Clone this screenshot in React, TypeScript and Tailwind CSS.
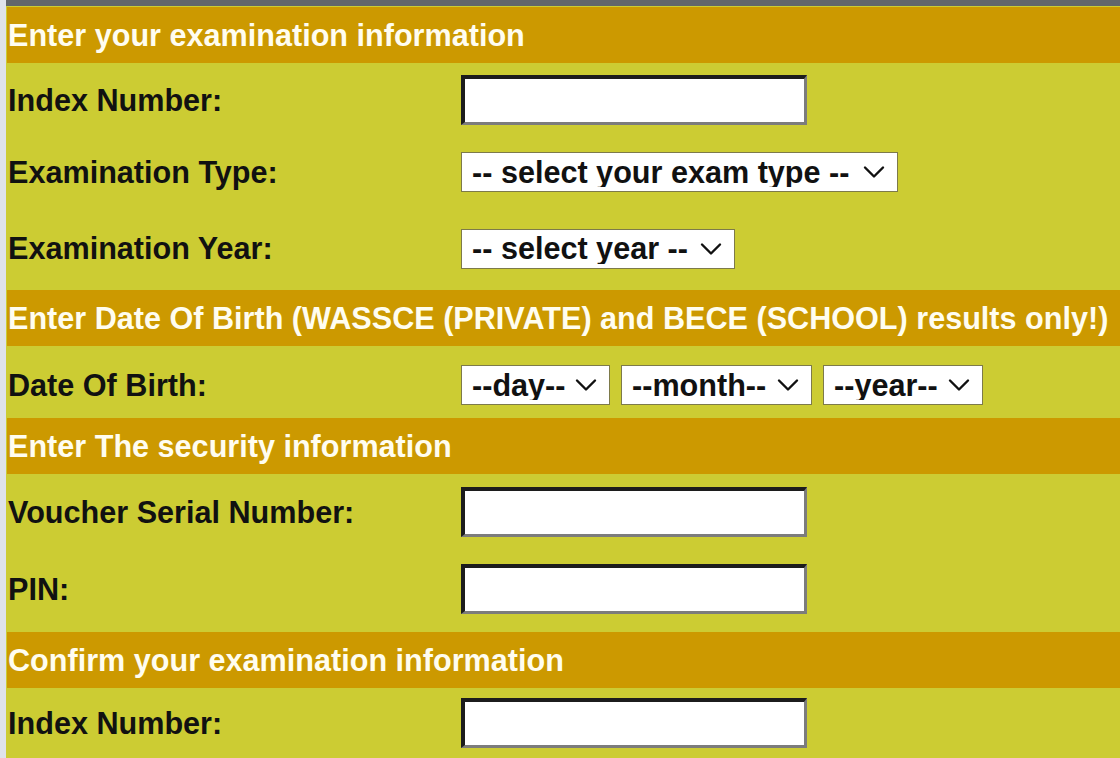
import React from "react";

const FONT = { fontFamily: '"Liberation Sans", Arial, sans-serif' };

function SectionHeader({ title, className = "" }: { title: string; className?: string }) {
  return (
    <div
      className={`ml-[1px] flex h-[56px] items-center whitespace-nowrap bg-[#cc9900] pl-[1px] text-[30.6px] font-bold leading-none text-[#fffdf0] ${className}`}
    >
      {title}
    </div>
  );
}

function TextBox() {
  return (
    <input
      type="text"
      className="h-[50px] w-[346px] border-[3px] border-t-[4px] border-l-[4px] border-t-[#1c1c1c] border-l-[#1c1c1c] border-b-[#7c7c7c] border-r-[#7c7c7c] bg-white px-2 text-[28px] outline-none"
    />
  );
}

function Dropdown({ label, width }: { label: string; width: string }) {
  return (
    <div className={`relative h-[40px] ${width}`}>
      <select
        defaultValue=""
        className="h-full w-full appearance-none border border-[#7d7a4a] bg-white pl-[10px] pr-[40px] text-[30.6px] font-bold leading-none text-[#111] outline-none"
        style={FONT}
      >
        <option value="">{label}</option>
      </select>
      <svg
        className="pointer-events-none absolute right-[13px] top-1/2 -translate-y-1/2"
        width="22"
        height="13"
        viewBox="0 0 22 13"
        fill="none"
      >
        <path d="M2 2 L11 11 L20 2" stroke="#111" strokeWidth="2.4" strokeLinecap="round" strokeLinejoin="round" />
      </svg>
    </div>
  );
}

function FormRow({
  label,
  children,
  className = "",
}: {
  label: string;
  children: React.ReactNode;
  className?: string;
}) {
  return (
    <div className={`flex items-center ${className}`}>
      <div className="w-[455px] pl-[2px] text-[30.6px] font-bold leading-none text-[#111]">{label}</div>
      <div className="flex gap-[11px]">{children}</div>
    </div>
  );
}

export default function App() {
  return (
    <div className="flex h-[758px] w-[1120px] overflow-hidden bg-[#cccc33]" style={FONT}>
      <div className="w-[6px] shrink-0 bg-[#dfe3ea]" />
      <div className="flex min-w-0 flex-1 flex-col">
        <div className="h-[6px] bg-[#62666a]" />
        <SectionHeader title="Enter your examination information" className="mt-[1px]" />

        <FormRow label="Index Number:" className="h-[74px]">
          <TextBox />
        </FormRow>
        <FormRow label="Examination Type:" className="h-[70px]">
          <Dropdown label="-- select your exam type --" width="w-[437px]" />
        </FormRow>
        <FormRow label="Examination Year:" className="h-[83px]">
          <Dropdown label="-- select year --" width="w-[274px]" />
        </FormRow>

        <SectionHeader title="Enter Date Of Birth (WASSCE (PRIVATE) and BECE (SCHOOL) results only!)" />
        <FormRow label="Date Of Birth:" className="h-[72px] pt-[6px]">
          <Dropdown label="--day--" width="w-[149px]" />
          <Dropdown label="--month--" width="w-[191px]" />
          <Dropdown label="--year--" width="w-[160px]" />
        </FormRow>

        <SectionHeader title="Enter The security information" />
        <FormRow label="Voucher Serial Number:" className="h-[76px]">
          <TextBox />
        </FormRow>
        <FormRow label="PIN:" className="h-[82px] pt-[14px] pb-[18px]">
          <TextBox />
        </FormRow>

        <SectionHeader title="Confirm your examination information" />
        <FormRow label="Index Number:" className="h-[70px] pt-[10px] pb-[10px]">
          <TextBox />
        </FormRow>
      </div>
    </div>
  );
}
